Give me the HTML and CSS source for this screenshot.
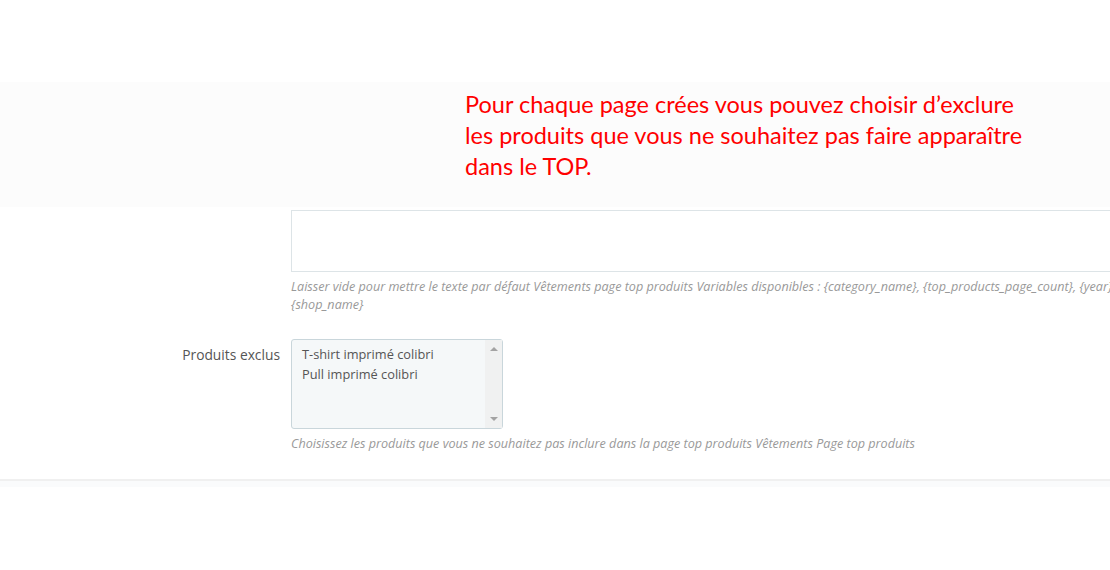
FILE: index.html
```html
<!DOCTYPE html>
<html>
    <head>
        <title>Pages top produits</title>
        <meta charset="utf-8">
        <link rel="stylesheet" href="styles.css">
    </head>
    <body>
        <div class="page">
            <div class="band">
                <p class="note">Pour chaque page crées vous pouvez choisir d’exclure<br>les produits que vous ne souhaitez pas faire apparaître<br>dans le TOP.</p>
            </div>

            <div class="form_row first_row">
                <div class="label"></div>
                <div class="field">
                    <div class="textarea"></div>
                    <p class="help">Laisser vide pour mettre le texte par défaut Vêtements page top produits Variables disponibles : {category_name}, {top_products_page_count}, {year}, {shop_name}</p>
                </div>
            </div>

            <div class="form_row">
                <div class="label">Produits exclus</div>
                <div class="field">
                    <div class="listbox">
                        <div class="options">
                            <div class="option">T-shirt imprimé colibri</div>
                            <div class="option">Pull imprimé colibri</div>
                        </div>
                        <div class="scrollbar">
                            <span class="arrow_up"></span>
                            <span class="arrow_down"></span>
                        </div>
                    </div>
                    <p class="help">Choisissez les produits que vous ne souhaitez pas inclure dans la page top produits Vêtements Page top produits</p>
                </div>
            </div>

            <div class="footer_line"></div>
        </div>
    </body>
</html>
```

FILE: styles.css
```css
body {
    margin: 0;
    background: #fff;
    overflow: hidden;
    font-family: "Open Sans", sans-serif;
}

.page {
    width: 1200px;
    padding-top: 82px;
}

.band {
    height: 125px;
    background: #fcfcfc;
    padding: 7px 0 0 465px;
    box-sizing: border-box;
}

.note {
    margin: 0;
    font-family: Lato, sans-serif;
    font-size: 23.5px;
    line-height: 31px;
    color: #f00;
}

.form_row {
    display: flex;
    gap: 11px;
    margin-top: 25px;
}

.first_row {
    margin-top: 3px;
}

.label {
    width: 280px;
    text-align: right;
    font-size: 13.8px;
    color: #555;
    padding-top: 6px;
}

.field {
    width: 870px;
}

.textarea {
    height: 60px;
    border: 1px solid #dde4e7;
    background: #fff;
}

.help {
    margin: 6px 0 0;
    font-size: 12.6px;
    font-style: italic;
    line-height: 18px;
    color: #999;
}

.listbox {
    width: 210px;
    height: 88px;
    border: 1px solid #c9d6db;
    border-radius: 3px;
    background: #f5f8f9;
    display: flex;
}

.options {
    flex: 1;
    padding: 4px 0 0 10px;
}

.option {
    font-size: 12.8px;
    line-height: 20px;
    color: #555;
}

.scrollbar {
    width: 17px;
    background: #f0f1f1;
    position: relative;
}

.arrow_up, .arrow_down {
    position: absolute;
    left: 5px;
    width: 0;
    height: 0;
    border-left: 4px solid transparent;
    border-right: 4px solid transparent;
}

.arrow_up {
    top: 7px;
    border-bottom: 4px solid #a3a3a3;
}

.arrow_down {
    bottom: 7px;
    border-top: 4px solid #a3a3a3;
}

.footer_line {
    margin-top: 26px;
    height: 2px;
    background: #f0f0f0;
    border-bottom: 6px solid #fafbfc;
}
```
